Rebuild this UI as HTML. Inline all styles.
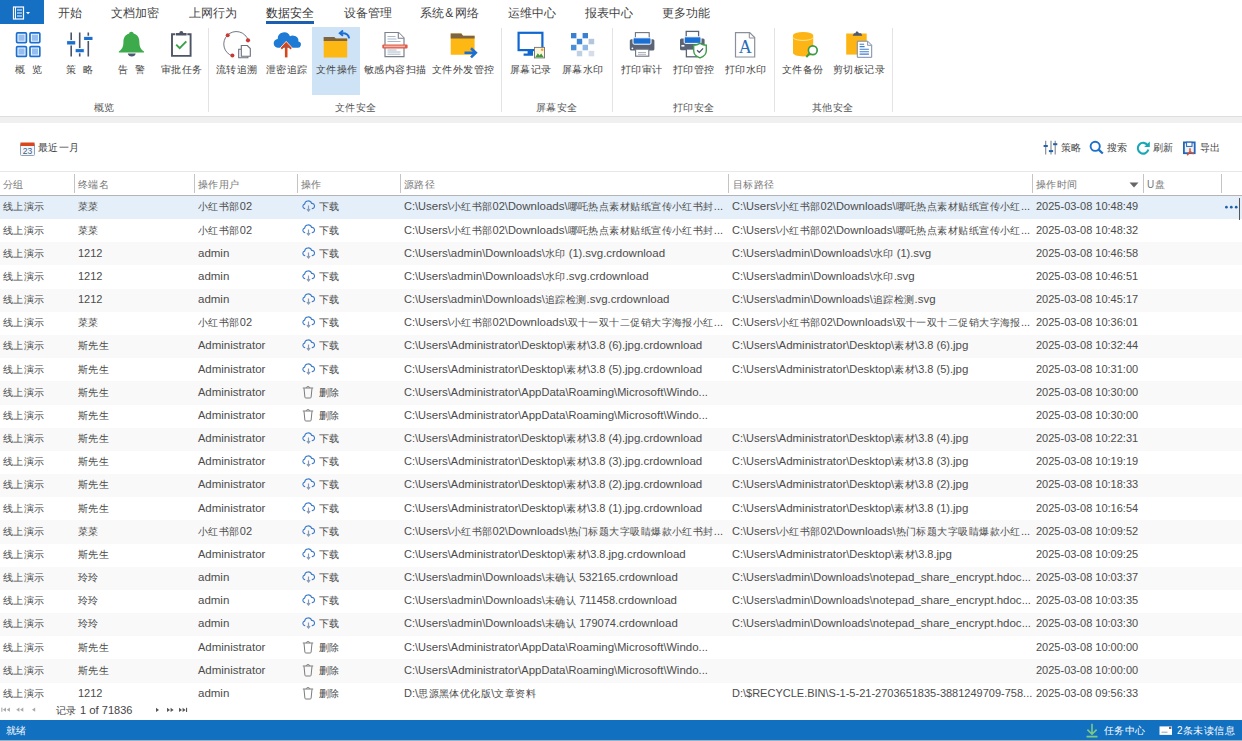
<!DOCTYPE html>
<html><head><meta charset="utf-8">
<style>
*{margin:0;padding:0;box-sizing:border-box}
html,body{width:1242px;height:741px;overflow:hidden;background:#fff;font-family:"Liberation Sans",sans-serif;color:#333}
.abs{position:absolute}
#appbtn{position:absolute;left:0;top:0;width:44px;height:24px;background:#1570c4}
.tab{position:absolute;top:5.5px;font-size:12px;line-height:14px;color:#444;white-space:nowrap}
#uline{position:absolute;left:266px;top:21px;width:48px;height:3px;background:#1b5fae}
#ribbon{position:absolute;left:0;top:0;width:1242px;height:117px;border-bottom:1px solid #dedede}
.sep{position:absolute;top:28px;width:1px;height:84px;background:#e3e3e3}
.btn{position:absolute;top:63px;font-size:10px;letter-spacing:0.45px;line-height:13px;color:#444;white-space:nowrap}
.grp{position:absolute;top:100.5px;font-size:10px;letter-spacing:0.45px;line-height:13px;color:#555;white-space:nowrap}
.ico{position:absolute;overflow:visible}
#strip{position:absolute;left:0;top:117px;width:1242px;height:6px;background:#f0f0f0}
.tb{position:absolute;top:141px;font-size:10px;letter-spacing:0.45px;line-height:13px;color:#444;white-space:nowrap}
#thead{position:absolute;left:0;top:171px;width:1242px;height:25px;border-top:1px solid #e8e8e8;border-bottom:1px solid #b4b4b4;background:#fff}
.th{position:absolute;top:6px;font-size:10px;letter-spacing:0.45px;line-height:13px;color:#777;white-space:nowrap}
.vd{position:absolute;top:2px;width:1px;height:19px;background:#c4c4c4}
.row{position:absolute;left:0;width:1242px;height:23.17px;background:#fff}
.row.alt{background:#f9f9f9}
.row.sel{background:#e4eff9}
.c{position:absolute;top:4.4px;font-size:11px;line-height:13px;color:#4c4c4c;white-space:nowrap}
.k{font-size:10px;letter-spacing:0.45px;font-weight:normal}
.l{font-style:normal;font-size:11.5px}
.op .ic{position:absolute;left:0;top:0}
.op{padding-left:17px}
.dots{position:absolute;left:1225px;top:9px;width:14px;height:4px;background:radial-gradient(circle at 1.6px 2px,#1f62ae 1.2px,transparent 1.6px) 0 0/4.6px 4px repeat-x}
#pager{position:absolute;left:0;top:703px;width:1242px;height:17px;background:#fff}
#status{position:absolute;left:0;top:719.5px;width:1242px;height:20.5px;background:#1170c0}
#status2{position:absolute;left:0;top:740px;width:1242px;height:1px;background:#9cb3c3}
.st{position:absolute;top:4.5px;font-size:10px;letter-spacing:0.45px;line-height:13px;color:#fff;white-space:nowrap}
</style></head><body>
<div id="ribbon">
 <div class="abs" style="left:312px;top:27px;width:48px;height:68px;background:#cfe3f6"></div>
 <div class="sep" style="left:208px"></div>
 <div class="sep" style="left:501px"></div>
 <div class="sep" style="left:612px"></div>
 <div class="sep" style="left:774px"></div>
 <div class="sep" style="left:892px"></div>
 <div class="btn" style="left:15px">概&nbsp;&nbsp;览</div>
 <div class="btn" style="left:66px">策&nbsp;&nbsp;略</div>
 <div class="btn" style="left:118px">告&nbsp;&nbsp;警</div>
 <div class="btn" style="left:161px">审批任务</div>
 <div class="btn" style="left:216px">流转追溯</div>
 <div class="btn" style="left:266px">泄密追踪</div>
 <div class="btn" style="left:316px">文件操作</div>
 <div class="btn" style="left:364px">敏感内容扫描</div>
 <div class="btn" style="left:432px">文件外发管控</div>
 <div class="btn" style="left:510px">屏幕记录</div>
 <div class="btn" style="left:562px">屏幕水印</div>
 <div class="btn" style="left:621px">打印审计</div>
 <div class="btn" style="left:673px">打印管控</div>
 <div class="btn" style="left:725px">打印水印</div>
 <div class="btn" style="left:782px">文件备份</div>
 <div class="btn" style="left:833px">剪切板记录</div>
 <div class="grp" style="left:94px">概览</div>
 <div class="grp" style="left:335px">文件安全</div>
 <div class="grp" style="left:536px">屏幕安全</div>
 <div class="grp" style="left:673px">打印安全</div>
 <div class="grp" style="left:812px">其他安全</div>
 <!-- ICONS -->
 <svg class="ico" style="left:0;top:0" width="900" height="62" viewBox="0 0 900 62">
  <!-- overview grid -->
  <g fill="#fff" stroke="#1a6fd0" stroke-width="1.7">
   <rect x="16.6" y="32.8" width="9.8" height="9.8" rx="1"/><rect x="30" y="32.8" width="9.8" height="9.8" rx="1"/>
   <rect x="16.6" y="46.6" width="9.8" height="9.8" rx="1"/><rect x="30" y="46.6" width="9.8" height="9.8" rx="1"/>
  </g>
  <g fill="#94bdf0">
   <rect x="18.4" y="34.6" width="6.2" height="6.2"/><rect x="31.8" y="34.6" width="6.2" height="6.2"/>
   <rect x="18.4" y="48.4" width="6.2" height="6.2"/><rect x="31.8" y="48.4" width="6.2" height="6.2"/>
  </g>
  <!-- sliders -->
  <g stroke="#4a5466" stroke-width="1.6"><path d="M71.2 32.5V56.5M79.7 32.5V56.5M88.3 32.5V56.5"/></g>
  <g fill="#1a6fd0" stroke="#fff" stroke-width="1"><rect x="66.6" y="40.6" width="9.2" height="4.4"/><rect x="75.1" y="48.6" width="9.2" height="4.2"/><rect x="83.6" y="36.3" width="9.4" height="4.2"/></g>
  <!-- bell -->
  <path d="M131.3 31.8c-1.2 0-2 .8-2.1 1.8-3.9 1.1-5.8 4.3-5.8 8.6 0 4.5-1.3 6.9-4.6 9.4v.9h25.2v-.9c-3.3-2.5-4.6-4.9-4.6-9.4 0-4.3-1.9-7.5-5.8-8.6-.1-1-.9-1.8-2.3-1.8z" fill="#3dab4b"/>
  <path d="M127.8 53.6h7.9a4 3.4 0 0 1-7.9 0z" fill="#4b5870"/>
  <!-- clipboard approve -->
  <path d="M175.3 34.3h-3.3v21.6h18.6V34.3h-3.3" fill="none" stroke="#4d5465" stroke-width="1.9"/>
  <path d="M176 33h3.3a2 2 0 0 1 4 0h3.3v2.4H176z" fill="#4d5465"/>
  <path d="M176.2 44.6l3.5 3.6 6.6-6.8" fill="none" stroke="#3ba14a" stroke-width="1.9"/>
  <!-- flow trace -->
  <path d="M248.2 40.3A12.5 12.5 0 1 0 232.6 56" fill="none" stroke="#727884" stroke-width="1"/>
  <circle cx="227.7" cy="35.2" r="2" fill="#c93a35"/><circle cx="248" cy="40.3" r="2.1" fill="#c93a35"/><circle cx="232.4" cy="55.5" r="2" fill="#c93a35"/>
  <path d="M241 49.3h-2.3v8.5h9.2v-1.3" fill="none" stroke="#6a6f7c" stroke-width="1.1"/>
  <path d="M241.3 45.5h6l3 3v7.8h-9z" fill="#fff" stroke="#6a6f7c" stroke-width="1.1"/>
  <!-- leak trace cloud -->
  <path d="M278.5 47.7a4.4 4.4 0 0 1-.8-8.8 6.4 6.4 0 0 1 12.3-2.6 5 5 0 0 1 3.8-.6 5 5 0 0 1 4.6 5.8 3 3 0 0 1-1.3 6.2z" fill="#1d7bd6"/>
  <path d="M286.2 43.6v13.8" stroke="#d6461b" stroke-width="2.6"/>
  <path d="M281 48.5l5.2-5.6 5.2 5.6" fill="none" stroke="#d6461b" stroke-width="2.6"/>
  <path d="M279.6 48.6l6.6-7.2 6.6 7.2" fill="none" stroke="#fff" stroke-width="1" opacity=".8"/>
  <!-- file operation folder -->
  <path d="M323.7 57.5V36.9h10.5l1.6 1.6h11.4v19z" fill="#fdb813"/>
  <path d="M323.7 41V36.9h10.5l1.6 1.6h11.4V41z" fill="#7d6443"/>
  <path d="M349.2 38.4c-.6-3.4-3-5.2-6.5-5.2h-2.4" fill="none" stroke="#1c6fd0" stroke-width="1.9"/>
  <path d="M343 30.6l-3.2 2.6 3.2 2.6" fill="none" stroke="#1c6fd0" stroke-width="1.9"/>
  <!-- sensitive scan doc -->
  <path d="M385 32.5h13.6l5.4 5.4v18.8h-19z" fill="#fff" stroke="#7b818c" stroke-width="1.2"/>
  <path d="M398.3 32.6v5.6h5.6" fill="#fff" stroke="#7b818c" stroke-width="1.1"/>
  <g stroke="#a8b8c9" stroke-width="1"><path d="M387.5 36.5h8M387.5 39h9M387.5 41.5h13M387.5 52h13M387.5 54.2h13M387.5 50h9"/></g>
  <rect x="382.3" y="44.4" width="25.3" height="4" rx="1" fill="#e25a47"/>
  <rect x="384" y="45.6" width="21" height="1.6" fill="#f3b3a6"/>
  <!-- file outgoing folder -->
  <path d="M450.7 54.8V33.5h10.7l1.6 2.3h11.6v19z" fill="#fdb813"/>
  <path d="M450.7 38.4v-4.9h10.7l1.6 2.3h11.6v2.6z" fill="#7d6443"/>
  <path d="M464.5 52.8h10" stroke="#1c6fd0" stroke-width="2.6"/>
  <path d="M471 48.2l4.8 4.6-4.8 4.6" fill="none" stroke="#1c6fd0" stroke-width="2.6"/>
  <!-- screen record -->
  <rect x="518.6" y="32.8" width="23.8" height="17.3" fill="#fff" stroke="#1167d0" stroke-width="2.2"/>
  <path d="M527.6 50.5h5.4v5.3h-9.4v-2.2h4z" fill="#1167d0"/>
  <rect x="534.5" y="47.4" width="10" height="10.5" fill="#fdf6dc" stroke="#7d7d7d" stroke-width="1"/>
  <path d="M535.3 57.3l2.5-4 1.8 2.2 1.6-2 2.5 3.8z" fill="#3f9c3a"/>
  <circle cx="542.2" cy="49.7" r="1.3" fill="#f5a623"/>
  <!-- screen watermark -->
  <g>
   <rect x="571" y="33" width="5.4" height="5.3" fill="#3b7fd0"/><rect x="582.6" y="33" width="5.4" height="5.3" fill="#3b7fd0"/>
   <rect x="576.8" y="38.8" width="5.4" height="5.5" fill="#3b86d6"/><rect x="588.6" y="38.8" width="5.6" height="5.5" fill="#b4c6dc"/>
   <rect x="571" y="44.8" width="5.4" height="5.5" fill="#4d8ed8"/><rect x="582.6" y="44.8" width="5.4" height="5.5" fill="#8db8e8"/>
   <rect x="576.8" y="50.8" width="5.4" height="5.5" fill="#c0cfe2"/><rect x="588.6" y="50.8" width="5.6" height="5.5" fill="#d5dde8"/>
  </g>
  <!-- printer audit -->
  <rect x="635.4" y="32.6" width="13.8" height="7" fill="#fff" stroke="#6d7380" stroke-width="1.1"/>
  <rect x="629.8" y="39.2" width="24.6" height="11.4" rx="1.5" fill="#5b6475"/>
  <rect x="633" y="37.8" width="18" height="6.4" rx="1.2" fill="#1a6fd4" stroke="#fff" stroke-width="1"/>
  <rect x="635.6" y="49.2" width="13.2" height="7" fill="#fff" stroke="#6d7380" stroke-width="1.1"/>
  <path d="M638 52.5h8M638 54.3h8" stroke="#9aa0aa" stroke-width=".8"/>
  <circle cx="632.4" cy="48.3" r=".9" fill="#fff"/>
  <!-- printer control -->
  <rect x="686.2" y="31.4" width="12.4" height="6.8" fill="#fff" stroke="#5b6475" stroke-width="1.3"/>
  <rect x="680" y="38.4" width="24.6" height="11.8" rx="1.5" fill="#5b6475"/>
  <rect x="684.2" y="36.8" width="16.8" height="6.6" rx="1.2" fill="#1a6fd4" stroke="#fff" stroke-width="1"/>
  <rect x="686.4" y="49" width="10" height="7.8" fill="#fff" stroke="#5b6475" stroke-width="1.3"/>
  <rect x="681.4" y="45" width="3" height="1.6" fill="#fff"/>
  <path d="M700 43.4c2.4 1.4 4.3 1.8 6.3 1.8v5.5c0 3.7-2.6 5.9-6.3 7.2-3.7-1.3-6.3-3.5-6.3-7.2v-5.5c2 0 3.9-.4 6.3-1.8z" fill="#fff" stroke="#3f9f4a" stroke-width="1.4"/>
  <path d="M697.1 50.2l2.2 2.2 3.8-4" fill="none" stroke="#4a5466" stroke-width="1.3"/>
  <!-- print watermark -->
  <path d="M735.5 32.6h14.2l5 5v19.4h-19.2z" fill="#fff" stroke="#8a9099" stroke-width="1.2"/>
  <path d="M749.3 32.8v5.2h5.3" fill="none" stroke="#8a9099" stroke-width="1"/>
  <text x="745.2" y="53.3" font-family="Liberation Serif" font-size="18" fill="#2a6db8" text-anchor="middle">A</text>
  <!-- file backup database -->
  <path d="M793 35.2v17.6c0 2.2 4.5 3.6 10.1 3.6s10.1-1.4 10.1-3.6V35.2z" fill="#fdb515"/>
  <ellipse cx="803.1" cy="35.2" rx="10.1" ry="3.2" fill="#fdb515"/>
  <path d="M793 37.2c0 1.8 4.5 3.2 10.1 3.2s10.1-1.4 10.1-3.2" fill="none" stroke="#fde79a" stroke-width="1"/>
  <circle cx="812.8" cy="50.2" r="4.4" fill="#fff" stroke="#3b9b43" stroke-width="1.7"/>
  <path d="M809.6 53.5l-3.3 3.5" stroke="#3b9b43" stroke-width="2"/>
  <!-- clipboard record -->
  <rect x="846.2" y="33.5" width="20.5" height="21.1" fill="#fdb515"/>
  <path d="M852.7 35.8h9.6l-1.2-2.6h-2.3a2 2 0 0 0-2.6-1.6 2 2 0 0 0-.6 1.6H854z" fill="#4b5870"/>
  <path d="M857.3 41.2h10.4l4 4v12.1h-14.4z" fill="#fff" stroke="#7b8aa8" stroke-width="1"/>
  <path d="M867.6 41.4v3.9h3.9" fill="none" stroke="#7b8aa8" stroke-width=".9"/>
  <g stroke="#3e7fcf" stroke-width="1.1"><path d="M859.6 44.3h4.5M859.6 46.6h5M859.6 49.3h9.3M859.6 51.7h9.3M859.6 54.1h9.3"/></g>
 </svg>
</div>
<div id="appbtn">
  <svg class="ico" style="left:12px;top:6px" width="20" height="14" viewBox="0 0 20 14">
   <rect x="1.5" y="1" width="10" height="12" fill="none" stroke="#fff" stroke-width="1.2"/>
   <path d="M3.5 1v12M5 4h5M5 7h5M5 10h5" stroke="#fff" stroke-width="1"/>
   <path d="M14 6h4l-2 2.2z" fill="#fff"/>
  </svg>
</div>
<div class="tab" style="left:58px">开始</div>
<div class="tab" style="left:111px">文档加密</div>
<div class="tab" style="left:189px">上网行为</div>
<div class="tab" style="left:266px;color:#333">数据安全</div>
<div class="tab" style="left:344px">设备管理</div>
<div class="tab" style="left:420px">系统<span style="margin:0 1.3px">&amp;</span>网络</div>
<div class="tab" style="left:508px">运维中心</div>
<div class="tab" style="left:585px">报表中心</div>
<div class="tab" style="left:662px">更多功能</div>
<div id="uline"></div>
<div id="strip"></div>
<!-- toolbar -->
<svg class="ico" style="left:20px;top:141px" width="15" height="15" viewBox="0 0 15 15">
 <rect x="0.5" y="2.5" width="14" height="12" rx="1" fill="#f4f6f9" stroke="#8ea3ba"/>
 <rect x="0.5" y="1.5" width="14" height="3.5" fill="#d8461d"/>
 <text x="7.5" y="13" font-size="8.5" text-anchor="middle" fill="#3b5d86" font-family="Liberation Sans">23</text>
</svg>
<div class="tb" style="left:38px">最近一月</div>
<svg class="ico" style="left:1040px;top:138px" width="190" height="18" viewBox="1040 138 190 18">
 <!-- strategy sliders -->
 <g stroke="#7d8591" stroke-width="1.1"><path d="M1045.7 140.8v13.6M1051 140.8v13.6M1055.2 140.8v13.6"/></g>
 <g fill="#1f64ad"><rect x="1043.6" y="145" width="4.2" height="2"/><rect x="1048.9" y="150.1" width="4.2" height="2"/><rect x="1053.1" y="143.2" width="4.2" height="2"/></g>
 <!-- search -->
 <circle cx="1095.2" cy="146.3" r="4.6" fill="none" stroke="#1d6fc9" stroke-width="1.9"/>
 <path d="M1098.6 149.7l4.2 3.8" stroke="#1d6fc9" stroke-width="2.3"/>
 <!-- refresh -->
 <path d="M1147.8 145.4a5.4 5.4 0 1 0 .6 4.2" fill="none" stroke="#19a7b5" stroke-width="2.1"/>
 <path d="M1149.8 141.4v5.6h-5.6z" fill="#19a7b5"/>
 <!-- export -->
 <rect x="1183.9" y="142.4" width="10.8" height="10.8" fill="#eaf2fb" stroke="#2467b8" stroke-width="1.8"/>
 <rect x="1186.6" y="142.2" width="5.4" height="4.2" fill="#fff" stroke="#2467b8" stroke-width="1"/>
 <path d="M1187.2 155.2l2.8-3.6 3.6 2.4M1190 151.6v-3.4" fill="none" stroke="#e0502b" stroke-width="1.5"/>
</svg>
<div class="tb" style="left:1061px">策略</div>
<div class="tb" style="left:1107px">搜索</div>
<div class="tb" style="left:1153px">刷新</div>
<div class="tb" style="left:1200px">导出</div>
<div id="thead">
 <div class="th" style="left:3px">分组</div>
 <div class="vd" style="left:74px"></div><div class="th" style="left:78px">终端名</div>
 <div class="vd" style="left:194px"></div><div class="th" style="left:198px">操作用户</div>
 <div class="vd" style="left:297px"></div><div class="th" style="left:301px">操作</div>
 <div class="vd" style="left:400px"></div><div class="th" style="left:404px">源路径</div>
 <div class="vd" style="left:728px"></div><div class="th" style="left:733px">目标路径</div>
 <div class="vd" style="left:1032px"></div><div class="th" style="left:1036px">操作时间</div>
 <svg class="ico" style="left:1129px;top:10px" width="10" height="6" viewBox="0 0 10 6"><path d="M0.5 0.5h9L5 5.5z" fill="#666"/></svg>
 <div class="vd" style="left:1143px"></div><div class="th" style="left:1147px">U盘</div>
 <div class="vd" style="left:1221px"></div>
</div>
<div class="row sel" style="top:196.00px"><span class="c" style="left:3px"><b class="k">线上演示</b></span><span class="c" style="left:78px"><b class="k">菜菜</b></span><span class="c" style="left:198px"><b class="k">小红书部</b>02</span><span class="c op" style="left:302px"><svg class="ic" width="13" height="12" viewBox="0 0 13 12"><path d="M3.2 8.6H2.8A2.3 2.3 0 0 1 2.6 4.1 3.6 3.6 0 0 1 9.6 3.4 2.6 2.6 0 0 1 10.2 8.6H9.8" fill="none" stroke="#3d7cc9" stroke-width="1.1"/><path d="M6.5 5.5V10.6M4.9 9.2 6.5 11 8.1 9.2" fill="none" stroke="#8a9bb3" stroke-width="1.2"/></svg><b class="k">下载</b></span><span class="c" style="left:404px">C:\U<i class="l">sers</i>\<b class="k">小红书部</b>02\D<i class="l">ownloads</i>\<b class="k">哪吒热点素材贴纸宣传小红书封</b>...</span><span class="c" style="left:732px">C:\U<i class="l">sers</i>\<b class="k">小红书部</b>02\D<i class="l">ownloads</i>\<b class="k">哪吒热点素材贴纸宣传小红</b>...</span><span class="c" style="left:1036px">2025-03-08 10:48:49</span><svg class="ico" style="left:1222px;top:8px" width="18" height="6" viewBox="1222 204 18 6"><g fill="#1f5fa8"><circle cx="1226.4" cy="207.2" r="1.35"/><circle cx="1231.3" cy="207.2" r="1.35"/><circle cx="1236.2" cy="207.2" r="1.35"/></g></svg></div>
<div class="row" style="top:219.17px"><span class="c" style="left:3px"><b class="k">线上演示</b></span><span class="c" style="left:78px"><b class="k">菜菜</b></span><span class="c" style="left:198px"><b class="k">小红书部</b>02</span><span class="c op" style="left:302px"><svg class="ic" width="13" height="12" viewBox="0 0 13 12"><path d="M3.2 8.6H2.8A2.3 2.3 0 0 1 2.6 4.1 3.6 3.6 0 0 1 9.6 3.4 2.6 2.6 0 0 1 10.2 8.6H9.8" fill="none" stroke="#3d7cc9" stroke-width="1.1"/><path d="M6.5 5.5V10.6M4.9 9.2 6.5 11 8.1 9.2" fill="none" stroke="#8a9bb3" stroke-width="1.2"/></svg><b class="k">下载</b></span><span class="c" style="left:404px">C:\U<i class="l">sers</i>\<b class="k">小红书部</b>02\D<i class="l">ownloads</i>\<b class="k">哪吒热点素材贴纸宣传小红书封</b>...</span><span class="c" style="left:732px">C:\U<i class="l">sers</i>\<b class="k">小红书部</b>02\D<i class="l">ownloads</i>\<b class="k">哪吒热点素材贴纸宣传小红</b>...</span><span class="c" style="left:1036px">2025-03-08 10:48:32</span></div>
<div class="row alt" style="top:242.34px"><span class="c" style="left:3px"><b class="k">线上演示</b></span><span class="c" style="left:78px">1212</span><span class="c" style="left:198px"><i class="l">admin</i></span><span class="c op" style="left:302px"><svg class="ic" width="13" height="12" viewBox="0 0 13 12"><path d="M3.2 8.6H2.8A2.3 2.3 0 0 1 2.6 4.1 3.6 3.6 0 0 1 9.6 3.4 2.6 2.6 0 0 1 10.2 8.6H9.8" fill="none" stroke="#3d7cc9" stroke-width="1.1"/><path d="M6.5 5.5V10.6M4.9 9.2 6.5 11 8.1 9.2" fill="none" stroke="#8a9bb3" stroke-width="1.2"/></svg><b class="k">下载</b></span><span class="c" style="left:404px">C:\U<i class="l">sers</i>\<i class="l">admin</i>\D<i class="l">ownloads</i>\<b class="k">水印</b> (1).<i class="l">svg</i>.<i class="l">crdownload</i></span><span class="c" style="left:732px">C:\U<i class="l">sers</i>\<i class="l">admin</i>\D<i class="l">ownloads</i>\<b class="k">水印</b> (1).<i class="l">svg</i></span><span class="c" style="left:1036px">2025-03-08 10:46:58</span></div>
<div class="row" style="top:265.51px"><span class="c" style="left:3px"><b class="k">线上演示</b></span><span class="c" style="left:78px">1212</span><span class="c" style="left:198px"><i class="l">admin</i></span><span class="c op" style="left:302px"><svg class="ic" width="13" height="12" viewBox="0 0 13 12"><path d="M3.2 8.6H2.8A2.3 2.3 0 0 1 2.6 4.1 3.6 3.6 0 0 1 9.6 3.4 2.6 2.6 0 0 1 10.2 8.6H9.8" fill="none" stroke="#3d7cc9" stroke-width="1.1"/><path d="M6.5 5.5V10.6M4.9 9.2 6.5 11 8.1 9.2" fill="none" stroke="#8a9bb3" stroke-width="1.2"/></svg><b class="k">下载</b></span><span class="c" style="left:404px">C:\U<i class="l">sers</i>\<i class="l">admin</i>\D<i class="l">ownloads</i>\<b class="k">水印</b>.<i class="l">svg</i>.<i class="l">crdownload</i></span><span class="c" style="left:732px">C:\U<i class="l">sers</i>\<i class="l">admin</i>\D<i class="l">ownloads</i>\<b class="k">水印</b>.<i class="l">svg</i></span><span class="c" style="left:1036px">2025-03-08 10:46:51</span></div>
<div class="row alt" style="top:288.68px"><span class="c" style="left:3px"><b class="k">线上演示</b></span><span class="c" style="left:78px">1212</span><span class="c" style="left:198px"><i class="l">admin</i></span><span class="c op" style="left:302px"><svg class="ic" width="13" height="12" viewBox="0 0 13 12"><path d="M3.2 8.6H2.8A2.3 2.3 0 0 1 2.6 4.1 3.6 3.6 0 0 1 9.6 3.4 2.6 2.6 0 0 1 10.2 8.6H9.8" fill="none" stroke="#3d7cc9" stroke-width="1.1"/><path d="M6.5 5.5V10.6M4.9 9.2 6.5 11 8.1 9.2" fill="none" stroke="#8a9bb3" stroke-width="1.2"/></svg><b class="k">下载</b></span><span class="c" style="left:404px">C:\U<i class="l">sers</i>\<i class="l">admin</i>\D<i class="l">ownloads</i>\<b class="k">追踪检测</b>.<i class="l">svg</i>.<i class="l">crdownload</i></span><span class="c" style="left:732px">C:\U<i class="l">sers</i>\<i class="l">admin</i>\D<i class="l">ownloads</i>\<b class="k">追踪检测</b>.<i class="l">svg</i></span><span class="c" style="left:1036px">2025-03-08 10:45:17</span></div>
<div class="row" style="top:311.85px"><span class="c" style="left:3px"><b class="k">线上演示</b></span><span class="c" style="left:78px"><b class="k">菜菜</b></span><span class="c" style="left:198px"><b class="k">小红书部</b>02</span><span class="c op" style="left:302px"><svg class="ic" width="13" height="12" viewBox="0 0 13 12"><path d="M3.2 8.6H2.8A2.3 2.3 0 0 1 2.6 4.1 3.6 3.6 0 0 1 9.6 3.4 2.6 2.6 0 0 1 10.2 8.6H9.8" fill="none" stroke="#3d7cc9" stroke-width="1.1"/><path d="M6.5 5.5V10.6M4.9 9.2 6.5 11 8.1 9.2" fill="none" stroke="#8a9bb3" stroke-width="1.2"/></svg><b class="k">下载</b></span><span class="c" style="left:404px">C:\U<i class="l">sers</i>\<b class="k">小红书部</b>02\D<i class="l">ownloads</i>\<b class="k">双十一双十二促销大字海报小红</b>...</span><span class="c" style="left:732px">C:\U<i class="l">sers</i>\<b class="k">小红书部</b>02\D<i class="l">ownloads</i>\<b class="k">双十一双十二促销大字海报</b>...</span><span class="c" style="left:1036px">2025-03-08 10:36:01</span></div>
<div class="row alt" style="top:335.02px"><span class="c" style="left:3px"><b class="k">线上演示</b></span><span class="c" style="left:78px"><b class="k">斯先生</b></span><span class="c" style="left:198px">A<i class="l">dministrator</i></span><span class="c op" style="left:302px"><svg class="ic" width="13" height="12" viewBox="0 0 13 12"><path d="M3.2 8.6H2.8A2.3 2.3 0 0 1 2.6 4.1 3.6 3.6 0 0 1 9.6 3.4 2.6 2.6 0 0 1 10.2 8.6H9.8" fill="none" stroke="#3d7cc9" stroke-width="1.1"/><path d="M6.5 5.5V10.6M4.9 9.2 6.5 11 8.1 9.2" fill="none" stroke="#8a9bb3" stroke-width="1.2"/></svg><b class="k">下载</b></span><span class="c" style="left:404px">C:\U<i class="l">sers</i>\A<i class="l">dministrator</i>\D<i class="l">esktop</i>\<b class="k">素材</b>\3.8 (6).<i class="l">jpg</i>.<i class="l">crdownload</i></span><span class="c" style="left:732px">C:\U<i class="l">sers</i>\A<i class="l">dministrator</i>\D<i class="l">esktop</i>\<b class="k">素材</b>\3.8 (6).<i class="l">jpg</i></span><span class="c" style="left:1036px">2025-03-08 10:32:44</span></div>
<div class="row" style="top:358.19px"><span class="c" style="left:3px"><b class="k">线上演示</b></span><span class="c" style="left:78px"><b class="k">斯先生</b></span><span class="c" style="left:198px">A<i class="l">dministrator</i></span><span class="c op" style="left:302px"><svg class="ic" width="13" height="12" viewBox="0 0 13 12"><path d="M3.2 8.6H2.8A2.3 2.3 0 0 1 2.6 4.1 3.6 3.6 0 0 1 9.6 3.4 2.6 2.6 0 0 1 10.2 8.6H9.8" fill="none" stroke="#3d7cc9" stroke-width="1.1"/><path d="M6.5 5.5V10.6M4.9 9.2 6.5 11 8.1 9.2" fill="none" stroke="#8a9bb3" stroke-width="1.2"/></svg><b class="k">下载</b></span><span class="c" style="left:404px">C:\U<i class="l">sers</i>\A<i class="l">dministrator</i>\D<i class="l">esktop</i>\<b class="k">素材</b>\3.8 (5).<i class="l">jpg</i>.<i class="l">crdownload</i></span><span class="c" style="left:732px">C:\U<i class="l">sers</i>\A<i class="l">dministrator</i>\D<i class="l">esktop</i>\<b class="k">素材</b>\3.8 (5).<i class="l">jpg</i></span><span class="c" style="left:1036px">2025-03-08 10:31:00</span></div>
<div class="row alt" style="top:381.36px"><span class="c" style="left:3px"><b class="k">线上演示</b></span><span class="c" style="left:78px"><b class="k">斯先生</b></span><span class="c" style="left:198px">A<i class="l">dministrator</i></span><span class="c op" style="left:302px"><svg class="ic" style="top:-1px" width="12" height="14" viewBox="0 0 12 14"><path d="M0.8 3H11.2M4.2 2.8C4.2 1.2 7.8 1.2 7.8 2.8M2 3.2 2.9 12.2Q3 13 3.8 13H8.2Q9 13 9.1 12.2L10 3.2" fill="none" stroke="#7c7c7c" stroke-width="1"/></svg><b class="k">删除</b></span><span class="c" style="left:404px">C:\U<i class="l">sers</i>\A<i class="l">dministrator</i>\A<i class="l">pp</i>D<i class="l">ata</i>\R<i class="l">oaming</i>\M<i class="l">icrosoft</i>\W<i class="l">indo</i>...</span><span class="c" style="left:732px"></span><span class="c" style="left:1036px">2025-03-08 10:30:00</span></div>
<div class="row" style="top:404.53px"><span class="c" style="left:3px"><b class="k">线上演示</b></span><span class="c" style="left:78px"><b class="k">斯先生</b></span><span class="c" style="left:198px">A<i class="l">dministrator</i></span><span class="c op" style="left:302px"><svg class="ic" style="top:-1px" width="12" height="14" viewBox="0 0 12 14"><path d="M0.8 3H11.2M4.2 2.8C4.2 1.2 7.8 1.2 7.8 2.8M2 3.2 2.9 12.2Q3 13 3.8 13H8.2Q9 13 9.1 12.2L10 3.2" fill="none" stroke="#7c7c7c" stroke-width="1"/></svg><b class="k">删除</b></span><span class="c" style="left:404px">C:\U<i class="l">sers</i>\A<i class="l">dministrator</i>\A<i class="l">pp</i>D<i class="l">ata</i>\R<i class="l">oaming</i>\M<i class="l">icrosoft</i>\W<i class="l">indo</i>...</span><span class="c" style="left:732px"></span><span class="c" style="left:1036px">2025-03-08 10:30:00</span></div>
<div class="row alt" style="top:427.70px"><span class="c" style="left:3px"><b class="k">线上演示</b></span><span class="c" style="left:78px"><b class="k">斯先生</b></span><span class="c" style="left:198px">A<i class="l">dministrator</i></span><span class="c op" style="left:302px"><svg class="ic" width="13" height="12" viewBox="0 0 13 12"><path d="M3.2 8.6H2.8A2.3 2.3 0 0 1 2.6 4.1 3.6 3.6 0 0 1 9.6 3.4 2.6 2.6 0 0 1 10.2 8.6H9.8" fill="none" stroke="#3d7cc9" stroke-width="1.1"/><path d="M6.5 5.5V10.6M4.9 9.2 6.5 11 8.1 9.2" fill="none" stroke="#8a9bb3" stroke-width="1.2"/></svg><b class="k">下载</b></span><span class="c" style="left:404px">C:\U<i class="l">sers</i>\A<i class="l">dministrator</i>\D<i class="l">esktop</i>\<b class="k">素材</b>\3.8 (4).<i class="l">jpg</i>.<i class="l">crdownload</i></span><span class="c" style="left:732px">C:\U<i class="l">sers</i>\A<i class="l">dministrator</i>\D<i class="l">esktop</i>\<b class="k">素材</b>\3.8 (4).<i class="l">jpg</i></span><span class="c" style="left:1036px">2025-03-08 10:22:31</span></div>
<div class="row" style="top:450.87px"><span class="c" style="left:3px"><b class="k">线上演示</b></span><span class="c" style="left:78px"><b class="k">斯先生</b></span><span class="c" style="left:198px">A<i class="l">dministrator</i></span><span class="c op" style="left:302px"><svg class="ic" width="13" height="12" viewBox="0 0 13 12"><path d="M3.2 8.6H2.8A2.3 2.3 0 0 1 2.6 4.1 3.6 3.6 0 0 1 9.6 3.4 2.6 2.6 0 0 1 10.2 8.6H9.8" fill="none" stroke="#3d7cc9" stroke-width="1.1"/><path d="M6.5 5.5V10.6M4.9 9.2 6.5 11 8.1 9.2" fill="none" stroke="#8a9bb3" stroke-width="1.2"/></svg><b class="k">下载</b></span><span class="c" style="left:404px">C:\U<i class="l">sers</i>\A<i class="l">dministrator</i>\D<i class="l">esktop</i>\<b class="k">素材</b>\3.8 (3).<i class="l">jpg</i>.<i class="l">crdownload</i></span><span class="c" style="left:732px">C:\U<i class="l">sers</i>\A<i class="l">dministrator</i>\D<i class="l">esktop</i>\<b class="k">素材</b>\3.8 (3).<i class="l">jpg</i></span><span class="c" style="left:1036px">2025-03-08 10:19:19</span></div>
<div class="row alt" style="top:474.04px"><span class="c" style="left:3px"><b class="k">线上演示</b></span><span class="c" style="left:78px"><b class="k">斯先生</b></span><span class="c" style="left:198px">A<i class="l">dministrator</i></span><span class="c op" style="left:302px"><svg class="ic" width="13" height="12" viewBox="0 0 13 12"><path d="M3.2 8.6H2.8A2.3 2.3 0 0 1 2.6 4.1 3.6 3.6 0 0 1 9.6 3.4 2.6 2.6 0 0 1 10.2 8.6H9.8" fill="none" stroke="#3d7cc9" stroke-width="1.1"/><path d="M6.5 5.5V10.6M4.9 9.2 6.5 11 8.1 9.2" fill="none" stroke="#8a9bb3" stroke-width="1.2"/></svg><b class="k">下载</b></span><span class="c" style="left:404px">C:\U<i class="l">sers</i>\A<i class="l">dministrator</i>\D<i class="l">esktop</i>\<b class="k">素材</b>\3.8 (2).<i class="l">jpg</i>.<i class="l">crdownload</i></span><span class="c" style="left:732px">C:\U<i class="l">sers</i>\A<i class="l">dministrator</i>\D<i class="l">esktop</i>\<b class="k">素材</b>\3.8 (2).<i class="l">jpg</i></span><span class="c" style="left:1036px">2025-03-08 10:18:33</span></div>
<div class="row" style="top:497.21px"><span class="c" style="left:3px"><b class="k">线上演示</b></span><span class="c" style="left:78px"><b class="k">斯先生</b></span><span class="c" style="left:198px">A<i class="l">dministrator</i></span><span class="c op" style="left:302px"><svg class="ic" width="13" height="12" viewBox="0 0 13 12"><path d="M3.2 8.6H2.8A2.3 2.3 0 0 1 2.6 4.1 3.6 3.6 0 0 1 9.6 3.4 2.6 2.6 0 0 1 10.2 8.6H9.8" fill="none" stroke="#3d7cc9" stroke-width="1.1"/><path d="M6.5 5.5V10.6M4.9 9.2 6.5 11 8.1 9.2" fill="none" stroke="#8a9bb3" stroke-width="1.2"/></svg><b class="k">下载</b></span><span class="c" style="left:404px">C:\U<i class="l">sers</i>\A<i class="l">dministrator</i>\D<i class="l">esktop</i>\<b class="k">素材</b>\3.8 (1).<i class="l">jpg</i>.<i class="l">crdownload</i></span><span class="c" style="left:732px">C:\U<i class="l">sers</i>\A<i class="l">dministrator</i>\D<i class="l">esktop</i>\<b class="k">素材</b>\3.8 (1).<i class="l">jpg</i></span><span class="c" style="left:1036px">2025-03-08 10:16:54</span></div>
<div class="row alt" style="top:520.38px"><span class="c" style="left:3px"><b class="k">线上演示</b></span><span class="c" style="left:78px"><b class="k">菜菜</b></span><span class="c" style="left:198px"><b class="k">小红书部</b>02</span><span class="c op" style="left:302px"><svg class="ic" width="13" height="12" viewBox="0 0 13 12"><path d="M3.2 8.6H2.8A2.3 2.3 0 0 1 2.6 4.1 3.6 3.6 0 0 1 9.6 3.4 2.6 2.6 0 0 1 10.2 8.6H9.8" fill="none" stroke="#3d7cc9" stroke-width="1.1"/><path d="M6.5 5.5V10.6M4.9 9.2 6.5 11 8.1 9.2" fill="none" stroke="#8a9bb3" stroke-width="1.2"/></svg><b class="k">下载</b></span><span class="c" style="left:404px">C:\U<i class="l">sers</i>\<b class="k">小红书部</b>02\D<i class="l">ownloads</i>\<b class="k">热门标题大字吸睛爆款小红书封</b>...</span><span class="c" style="left:732px">C:\U<i class="l">sers</i>\<b class="k">小红书部</b>02\D<i class="l">ownloads</i>\<b class="k">热门标题大字吸睛爆款小红</b>...</span><span class="c" style="left:1036px">2025-03-08 10:09:52</span></div>
<div class="row" style="top:543.55px"><span class="c" style="left:3px"><b class="k">线上演示</b></span><span class="c" style="left:78px"><b class="k">斯先生</b></span><span class="c" style="left:198px">A<i class="l">dministrator</i></span><span class="c op" style="left:302px"><svg class="ic" width="13" height="12" viewBox="0 0 13 12"><path d="M3.2 8.6H2.8A2.3 2.3 0 0 1 2.6 4.1 3.6 3.6 0 0 1 9.6 3.4 2.6 2.6 0 0 1 10.2 8.6H9.8" fill="none" stroke="#3d7cc9" stroke-width="1.1"/><path d="M6.5 5.5V10.6M4.9 9.2 6.5 11 8.1 9.2" fill="none" stroke="#8a9bb3" stroke-width="1.2"/></svg><b class="k">下载</b></span><span class="c" style="left:404px">C:\U<i class="l">sers</i>\A<i class="l">dministrator</i>\D<i class="l">esktop</i>\<b class="k">素材</b>\3.8.<i class="l">jpg</i>.<i class="l">crdownload</i></span><span class="c" style="left:732px">C:\U<i class="l">sers</i>\A<i class="l">dministrator</i>\D<i class="l">esktop</i>\<b class="k">素材</b>\3.8.<i class="l">jpg</i></span><span class="c" style="left:1036px">2025-03-08 10:09:25</span></div>
<div class="row alt" style="top:566.72px"><span class="c" style="left:3px"><b class="k">线上演示</b></span><span class="c" style="left:78px"><b class="k">玲玲</b></span><span class="c" style="left:198px"><i class="l">admin</i></span><span class="c op" style="left:302px"><svg class="ic" width="13" height="12" viewBox="0 0 13 12"><path d="M3.2 8.6H2.8A2.3 2.3 0 0 1 2.6 4.1 3.6 3.6 0 0 1 9.6 3.4 2.6 2.6 0 0 1 10.2 8.6H9.8" fill="none" stroke="#3d7cc9" stroke-width="1.1"/><path d="M6.5 5.5V10.6M4.9 9.2 6.5 11 8.1 9.2" fill="none" stroke="#8a9bb3" stroke-width="1.2"/></svg><b class="k">下载</b></span><span class="c" style="left:404px">C:\U<i class="l">sers</i>\<i class="l">admin</i>\D<i class="l">ownloads</i>\<b class="k">未确认</b> 532165.<i class="l">crdownload</i></span><span class="c" style="left:732px">C:\U<i class="l">sers</i>\<i class="l">admin</i>\D<i class="l">ownloads</i>\<i class="l">notepad_share_encrypt</i>.<i class="l">hdoc</i>...</span><span class="c" style="left:1036px">2025-03-08 10:03:37</span></div>
<div class="row" style="top:589.89px"><span class="c" style="left:3px"><b class="k">线上演示</b></span><span class="c" style="left:78px"><b class="k">玲玲</b></span><span class="c" style="left:198px"><i class="l">admin</i></span><span class="c op" style="left:302px"><svg class="ic" width="13" height="12" viewBox="0 0 13 12"><path d="M3.2 8.6H2.8A2.3 2.3 0 0 1 2.6 4.1 3.6 3.6 0 0 1 9.6 3.4 2.6 2.6 0 0 1 10.2 8.6H9.8" fill="none" stroke="#3d7cc9" stroke-width="1.1"/><path d="M6.5 5.5V10.6M4.9 9.2 6.5 11 8.1 9.2" fill="none" stroke="#8a9bb3" stroke-width="1.2"/></svg><b class="k">下载</b></span><span class="c" style="left:404px">C:\U<i class="l">sers</i>\<i class="l">admin</i>\D<i class="l">ownloads</i>\<b class="k">未确认</b> 711458.<i class="l">crdownload</i></span><span class="c" style="left:732px">C:\U<i class="l">sers</i>\<i class="l">admin</i>\D<i class="l">ownloads</i>\<i class="l">notepad_share_encrypt</i>.<i class="l">hdoc</i>...</span><span class="c" style="left:1036px">2025-03-08 10:03:35</span></div>
<div class="row alt" style="top:613.06px"><span class="c" style="left:3px"><b class="k">线上演示</b></span><span class="c" style="left:78px"><b class="k">玲玲</b></span><span class="c" style="left:198px"><i class="l">admin</i></span><span class="c op" style="left:302px"><svg class="ic" width="13" height="12" viewBox="0 0 13 12"><path d="M3.2 8.6H2.8A2.3 2.3 0 0 1 2.6 4.1 3.6 3.6 0 0 1 9.6 3.4 2.6 2.6 0 0 1 10.2 8.6H9.8" fill="none" stroke="#3d7cc9" stroke-width="1.1"/><path d="M6.5 5.5V10.6M4.9 9.2 6.5 11 8.1 9.2" fill="none" stroke="#8a9bb3" stroke-width="1.2"/></svg><b class="k">下载</b></span><span class="c" style="left:404px">C:\U<i class="l">sers</i>\<i class="l">admin</i>\D<i class="l">ownloads</i>\<b class="k">未确认</b> 179074.<i class="l">crdownload</i></span><span class="c" style="left:732px">C:\U<i class="l">sers</i>\<i class="l">admin</i>\D<i class="l">ownloads</i>\<i class="l">notepad_share_encrypt</i>.<i class="l">hdoc</i>...</span><span class="c" style="left:1036px">2025-03-08 10:03:30</span></div>
<div class="row" style="top:636.23px"><span class="c" style="left:3px"><b class="k">线上演示</b></span><span class="c" style="left:78px"><b class="k">斯先生</b></span><span class="c" style="left:198px">A<i class="l">dministrator</i></span><span class="c op" style="left:302px"><svg class="ic" style="top:-1px" width="12" height="14" viewBox="0 0 12 14"><path d="M0.8 3H11.2M4.2 2.8C4.2 1.2 7.8 1.2 7.8 2.8M2 3.2 2.9 12.2Q3 13 3.8 13H8.2Q9 13 9.1 12.2L10 3.2" fill="none" stroke="#7c7c7c" stroke-width="1"/></svg><b class="k">删除</b></span><span class="c" style="left:404px">C:\U<i class="l">sers</i>\A<i class="l">dministrator</i>\A<i class="l">pp</i>D<i class="l">ata</i>\R<i class="l">oaming</i>\M<i class="l">icrosoft</i>\W<i class="l">indo</i>...</span><span class="c" style="left:732px"></span><span class="c" style="left:1036px">2025-03-08 10:00:00</span></div>
<div class="row alt" style="top:659.40px"><span class="c" style="left:3px"><b class="k">线上演示</b></span><span class="c" style="left:78px"><b class="k">斯先生</b></span><span class="c" style="left:198px">A<i class="l">dministrator</i></span><span class="c op" style="left:302px"><svg class="ic" style="top:-1px" width="12" height="14" viewBox="0 0 12 14"><path d="M0.8 3H11.2M4.2 2.8C4.2 1.2 7.8 1.2 7.8 2.8M2 3.2 2.9 12.2Q3 13 3.8 13H8.2Q9 13 9.1 12.2L10 3.2" fill="none" stroke="#7c7c7c" stroke-width="1"/></svg><b class="k">删除</b></span><span class="c" style="left:404px">C:\U<i class="l">sers</i>\A<i class="l">dministrator</i>\A<i class="l">pp</i>D<i class="l">ata</i>\R<i class="l">oaming</i>\M<i class="l">icrosoft</i>\W<i class="l">indo</i>...</span><span class="c" style="left:732px"></span><span class="c" style="left:1036px">2025-03-08 10:00:00</span></div>
<div class="row" style="top:682.57px"><span class="c" style="left:3px"><b class="k">线上演示</b></span><span class="c" style="left:78px">1212</span><span class="c" style="left:198px"><i class="l">admin</i></span><span class="c op" style="left:302px"><svg class="ic" style="top:-1px" width="12" height="14" viewBox="0 0 12 14"><path d="M0.8 3H11.2M4.2 2.8C4.2 1.2 7.8 1.2 7.8 2.8M2 3.2 2.9 12.2Q3 13 3.8 13H8.2Q9 13 9.1 12.2L10 3.2" fill="none" stroke="#7c7c7c" stroke-width="1"/></svg><b class="k">删除</b></span><span class="c" style="left:404px">D:\<b class="k">思源黑体优化版</b>\<b class="k">文章资料</b></span><span class="c" style="left:732px">D:\$RECYCLE.BIN\S-1-5-21-2703651835-3881249709-758...</span><span class="c" style="left:1036px">2025-03-08 09:56:33</span></div><div id="pager">
 <svg class="ico" style="left:0;top:0" width="200" height="17" viewBox="0 703 200 17">
  <g fill="#a9a9a9">
   <rect x="1.3" y="707.6" width="1.1" height="4.2"/><path d="M6 707.6v4.2l-3.2-2.1zM9.9 707.6v4.2l-3.2-2.1z"/>
   <path d="M19.4 707.6v4.2l-3.2-2.1zM23.3 707.6v4.2l-3.2-2.1z"/>
   <path d="M35.2 707.6v4.2l-3.2-2.1z"/>
  </g>
  <g fill="#555">
   <path d="M156 707.8v4.2l3 -2.1z"/>
   <path d="M167 707.8v4.2l3-2.1zM170.6 707.8v4.2l3-2.1z"/>
   <path d="M179 707.8v4.2l3-2.1zM182.6 707.8v4.2l3-2.1z"/><rect x="186" y="707.8" width="1.1" height="4.2"/>
  </g>
 </svg>
 <div class="abs" style="left:56px;top:1px;font-size:11px;line-height:13px;color:#444;white-space:nowrap"><b class="k">记录</b> 1 <i class="l">of</i> 71836</div>
</div>
<div id="status"><div class="st" style="left:6px">就绪</div>
 <svg class="ico" style="left:1080px;top:0" width="100" height="20" viewBox="1080 719 100 20">
  <path d="M1092 722.8v10M1087.4 728.6l4.6 4.6 4.6-4.6M1086.5 735.6h11" fill="none" stroke="#7cc985" stroke-width="1.6"/>
  <rect x="1159.5" y="725.4" width="12.5" height="8.5" fill="#fff"/>
  <path d="M1161.5 731.2h6" stroke="#9aa3ad" stroke-width="1"/>
  <rect x="1169" y="725.8" width="2.4" height="2.2" fill="#6b6b6b"/>
 </svg>
 <div class="st" style="left:1104px">任务中心</div>
 <div class="st" style="left:1177px">2条未读信息</div>
</div>
<div id="status2"></div>
<div class="abs" style="left:1239px;top:197.5px;width:1px;height:22px;background:#555"></div>
</body></html>
